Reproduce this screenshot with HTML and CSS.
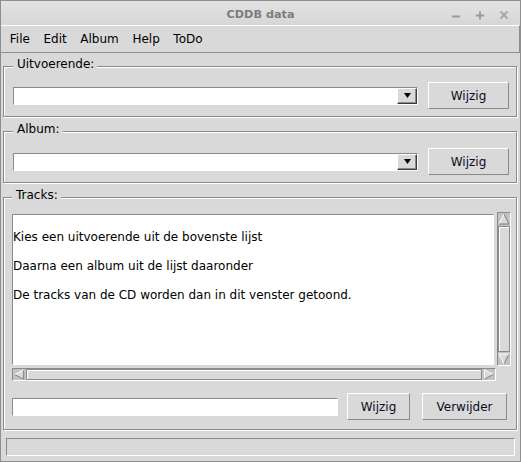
FILE: index.html
```html
<!DOCTYPE html>
<html lang="nl">
<head>
<meta charset="utf-8">
<title>CDDB data</title>
<link rel="stylesheet" href="styles.css">
</head>
<body>
<div class="window">
  <div class="titlebar">
    <span></span>
    <span class="title">CDDB data</span>
    <span class="wm-buttons">
      <svg class="wm" viewBox="0 0 10 10"><path d="M1 6.5H9"/></svg>
      <svg class="wm" viewBox="0 0 10 10"><path d="M1 5.5H9M5 1.5V9.5"/></svg>
      <svg class="wm wm-x" viewBox="0 0 10 10"><path d="M1.5 1.5L8.5 8.5M8.5 1.5L1.5 8.5"/></svg>
    </span>
  </div>
  <div class="menubar">
    <span class="menu">File</span>
    <span class="menu">Edit</span>
    <span class="menu">Album</span>
    <span class="menu">Help</span>
    <span class="menu">ToDo</span>
  </div>
  <div class="content">
    <fieldset class="group group-1">
      <legend>Uitvoerende:</legend>
      <div class="row">
        <div class="combo">
          <div class="combo-entry"></div>
          <div class="combo-btn"><svg class="combo-arrow" viewBox="0 0 7 5"><path d="M0 0H7L3.5 5Z"/></svg></div>
        </div>
        <div class="btn btn-wijzig">Wijzig</div>
      </div>
    </fieldset>
    <fieldset class="group group-2">
      <legend>Album:</legend>
      <div class="row">
        <div class="combo">
          <div class="combo-entry"></div>
          <div class="combo-btn"><svg class="combo-arrow" viewBox="0 0 7 5"><path d="M0 0H7L3.5 5Z"/></svg></div>
        </div>
        <div class="btn btn-wijzig">Wijzig</div>
      </div>
    </fieldset>
    <fieldset class="group group-3">
      <legend>Tracks:</legend>
      <div class="tracks-top">
        <div class="textbox">
          <p>Kies een uitvoerende uit de bovenste lijst</p>
          <p>Daarna een album uit de lijst daaronder</p>
          <p>De tracks van de CD worden dan in dit venster getoond.</p>
        </div>
        <div class="vscroll">
          <svg class="sb-arrow" viewBox="0 0 12 12"><path class="tri" d="M6 1L11 11H1Z"/><path class="lt" d="M1 11L6 1"/><path class="dk" d="M6 1L11 11H1"/></svg>
          <div class="slider"></div>
          <svg class="sb-arrow" viewBox="0 0 12 12"><path class="tri" d="M1 1H11L6 11Z"/><path class="dk" d="M11 1L6 11"/><path class="lt" d="M6 11L1 1H11"/></svg>
        </div>
      </div>
      <div class="hscroll">
        <svg class="sb-arrow" viewBox="0 0 12 12"><path class="tri" d="M1 6L11 1V11Z"/><path class="dk" d="M1 6L11 11V1"/><path class="lt" d="M11 1L1 6"/></svg>
        <div class="slider"></div>
        <svg class="sb-arrow" viewBox="0 0 12 12"><path class="tri" d="M11 6L1 1V11Z"/><path class="lt" d="M1 11V1L11 6"/><path class="dk" d="M11 6L1 11"/></svg>
      </div>
      <div class="bottom-row">
        <div class="entry"></div>
        <div class="btn btn-small">Wijzig</div>
        <div class="btn btn-remove">Verwijder</div>
      </div>
    </fieldset>
  </div>
  <div class="statusbar"></div>
</div>
</body>
</html>
```
FILE: styles.css
```css
* { box-sizing: border-box; }
html, body { margin: 0; padding: 0; }
body {
  width: 521px;
  height: 462px;
  overflow: hidden;
  background: #d9d9d9;
  font-family: "DejaVu Sans", sans-serif;
  font-size: 12px;
  color: #000;
}
.window {
  width: 521px;
  height: 462px;
  border: 1px solid #8e8e8e;
  display: flex;
  flex-direction: column;
  background: #d9d9d9;
}
.titlebar {
  height: 24px;
  padding-top: 4px;
  display: grid;
  grid-template-columns: 1fr auto 1fr;
  align-items: center;
  background: linear-gradient(#e3e3e3, #d6d6d6);
}
.title {
  font-weight: bold;
  font-size: 11.25px;
  color: #7c7c7c;
  line-height: 14px;
}
.wm-buttons {
  justify-self: end;
  display: flex;
  gap: 14px;
  padding-right: 11px;
}
.wm {
  width: 10px;
  height: 10px;
  display: block;
  fill: none;
  stroke: #9b9b9b;
  stroke-width: 2;
}
.wm-x { stroke: #a9a9a9; }
.menubar {
  height: 28px;
  border-top: 1px solid #fff;
  border-bottom: 1px solid #8e8e8e;
  border-right: 1px solid #8e8e8e;
  display: flex;
  align-items: center;
  padding-left: 2px;
}
.menu { padding: 0 6.8px; line-height: 14px; }
.content {
  padding: 4px 2px 0 2px;
  display: flex;
  flex-direction: column;
  align-items: flex-start;
  gap: 5px;
}
.group {
  margin: 0;
  min-width: 0;
  width: 514px;
  border: 1px solid #8a8a8a;
  box-shadow: inset 1px 1px 0 #fff, 1px 1px 0 #fff;
  padding: 6px 7px 7px 9px;
}
.group-2 { padding-top: 7px; }
.group-3 { padding: 5px 5px 9px 8px; }
legend {
  padding: 0 3px 5px 4px;
  line-height: 14px;
  background: #d9d9d9;
}
.row {
  display: flex;
  align-items: center;
  height: 27px;
}
.combo {
  width: 405px;
  height: 18px;
  display: flex;
  border: 1px solid;
  border-color: #8a8a8a #fff #fff #8a8a8a;
}
.combo-entry { flex: 1; background: #fff; }
.combo-btn {
  width: 20px;
  display: flex;
  align-items: center;
  justify-content: center;
  background: #d9d9d9;
  border: 1px solid;
  border-color: #fff #3a3a3a #3a3a3a #fff;
  box-shadow: inset -1px -1px 0 #8a8a8a;
}
.combo-arrow { width: 7px; height: 5px; display: block; fill: #000; }
.btn {
  height: 27px;
  display: flex;
  align-items: center;
  justify-content: center;
  border: 1px solid;
  border-color: #fff #8a8a8a #8a8a8a #fff;
  color: #0c0c1c;
}
.btn-wijzig { width: 81px; margin-left: auto; }
.tracks-top {
  display: flex;
  gap: 3px;
  height: 154px;
}
.textbox {
  width: 482px;
  height: 151px;
  margin-top: 2px;
  background: #fff;
  border: 1px solid;
  border-color: #8a8a8a #fff #fff #8a8a8a;
  padding: 15px 0 0 0;
  line-height: 14.5px;
}
.textbox p { margin: 0 0 14.5px; white-space: nowrap; }
.vscroll, .hscroll {
  display: flex;
  background: #c3c3c3;
  border: 1px solid;
  border-color: #8a8a8a #fff #fff #8a8a8a;
}
.vscroll { width: 14px; flex-direction: column; }
.hscroll { width: 484px; height: 13px; margin-top: 2px; }
.sb-arrow { width: 12px; height: 12px; flex: none; display: block; }
.hscroll .sb-arrow { height: 11px; }
.sb-arrow .tri { fill: #d9d9d9; stroke: none; }
.sb-arrow .lt { fill: none; stroke: #fff; stroke-width: 1; }
.sb-arrow .dk { fill: none; stroke: #7e7e7e; stroke-width: 1; }
.slider {
  flex: 1;
  background: #d9d9d9;
  border: 1px solid #8a8a8a;
  box-shadow: inset 1px 1px 0 #fff;
}
.vscroll .slider { margin: 1px 0; }
.hscroll .slider { margin: 0 1px; }
.bottom-row {
  display: flex;
  align-items: center;
  height: 27px;
  margin-top: 12px;
}
.entry {
  width: 326px;
  height: 18px;
  background: #fff;
  border: 1px solid;
  border-color: #8a8a8a #fff #fff #8a8a8a;
  margin-right: 9px;
}
.btn-small { width: 63px; margin-right: 12px; }
.btn-remove { width: 85px; }
.statusbar {
  height: 18px;
  margin: 8px 5px 0 5px;
  border: 1px solid;
  border-color: #8a8a8a #fff #fff #8a8a8a;
}
```
